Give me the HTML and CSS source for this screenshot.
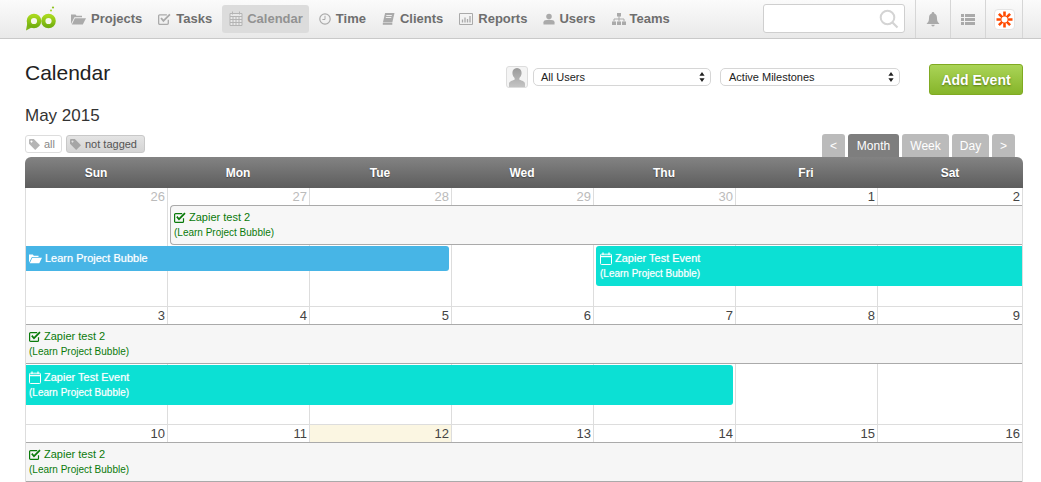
FILE: index.html
```html
<!DOCTYPE html>
<html lang="en">
<head>
<meta charset="utf-8">
<title>Calendar</title>
<link rel="stylesheet" href="styles.css">
</head>
<body>
<svg class="defs" width="0" height="0" aria-hidden="true">
  <symbol id="i-check" viewBox="0 0 12 11"><path d="M9.500 6.200V9.400a1 1 0 0 1-1 1H1.600a1 1 0 0 1-1-1V2.600a1 1 0 0 1 1-1h6.600" fill="none" stroke="currentColor" stroke-width="1.200"/><path d="M2.800 4.600 5 7.200 11 1.200" fill="none" stroke="currentColor" stroke-width="1.700"/></symbol>
  <symbol id="i-cal" viewBox="0 0 12 13"><path d="M1.500 2.200h9a1 1 0 0 1 1 1v8.300a1 1 0 0 1-1 1h-9a1 1 0 0 1-1-1V3.200a1 1 0 0 1 1-1z" fill="none" stroke="currentColor"/><path d="M.5 4.500h11" stroke="currentColor" stroke-width="1.400"/><path d="M3 .5v2.600M9 .5v2.600" stroke="currentColor" stroke-width="1.300"/></symbol>
  <symbol id="i-folder" viewBox="0 0 15 12"><path d="M0 11V1.500h4.500l1 1.300h5.500v1.400H3.400L0 11z" fill="currentColor"/><path d="M3.900 5.200H15L11.800 11.600H.8z" fill="currentColor"/></symbol>
  <symbol id="i-tag" viewBox="0 0 11 11"><path d="M0 1a1 1 0 0 1 1-1h3.800L11 6.200 6.200 11 0 4.800zM2.500 1.500a1 1 0 1 0 .01 0z" fill="currentColor" fill-rule="evenodd"/></symbol>
  <symbol id="i-updown" viewBox="0 0 6 10"><path d="M3 0l2.600 3.800H.4zM3 10 .4 6.200h5.200z" fill="currentColor"/></symbol>
</svg>

<header class="topbar">
  <svg class="logo" width="32" height="26" viewBox="0 0 32 26" aria-label="Project Bubble">
    <defs><linearGradient id="lg" x1="0" y1="0" x2="0" y2="1"><stop offset="0" stop-color="#a8d81e"/><stop offset="1" stop-color="#74b010"/></linearGradient></defs>
    <path d="M1 24.500 2.500 16 8.500 20.500z" fill="#7cb518"/>
    <circle cx="9" cy="15" r="5.200" fill="#f6f8ec" stroke="url(#lg)" stroke-width="4.200"/>
    <circle cx="23.500" cy="15" r="5.200" fill="#f6f8ec" stroke="url(#lg)" stroke-width="4.200"/>
    <circle cx="28" cy="1.500" r="1.100" fill="#8fc31f"/><circle cx="26" cy="4.500" r="1" fill="#a6d622"/>
  </svg>
  <nav class="nav">
    <a class="nav-item"><svg class="nav-ico" width="15" height="12"><use href="#i-folder"/></svg>Projects</a>
    <a class="nav-item"><svg class="nav-ico" width="13" height="12"><use href="#i-check"/></svg>Tasks</a>
    <a class="nav-item active"><svg class="nav-ico" width="14" height="15" viewBox="0 0 14 15"><path d="M1 2.500h12v12H1z" fill="#e8e8e8" stroke="currentColor"/><path d="M1 5.500h12M1 8.500h12M1 11.500h12M4 5.500v9M7 5.500v9M10 5.500v9M3.500 .5v3M10.500 .5v3" stroke="currentColor" fill="none"/></svg>Calendar</a>
    <a class="nav-item"><svg class="nav-ico" width="12" height="12" viewBox="0 0 12 12"><circle cx="6" cy="6" r="5.200" fill="none" stroke="currentColor" stroke-width="1.200"/><path d="M6 2.800V6.500H3.400" fill="none" stroke="currentColor"/></svg>Time</a>
    <a class="nav-item"><svg class="nav-ico" width="13" height="12" viewBox="0 0 12 12"><path d="M2.600 0H12L9.800 9.500H.4z" fill="currentColor"/><path d="M.3 10H9.800v1.800H.3z" fill="currentColor"/><path d="M3.800 2.500h5.500M3.300 4.500h5.500" stroke="#eee"/></svg>Clients</a>
    <a class="nav-item"><svg class="nav-ico" width="14" height="12" viewBox="0 0 14 12"><path d="M.5.500h13v11H.5z" fill="none" stroke="currentColor"/><path d="M3.500 6.500v3M6 4.500v5M8.500 6v3.500M11 3v6.500" stroke="currentColor" stroke-width="1.300"/></svg>Reports</a>
    <a class="nav-item nav-tight"><svg class="nav-ico" width="12" height="12" viewBox="0 0 13 12"><circle cx="6.500" cy="3.200" r="3" fill="currentColor"/><path d="M.5 12V9.500C.5 7.500 3 6.800 6.500 6.800s6 .7 6 2.700V12z" fill="currentColor"/></svg>Users</a>
    <a class="nav-item nav-tight"><svg class="nav-ico" width="14" height="12" viewBox="0 0 14 12"><path d="M5 0h4v3.500H5zM0 8.500h4V12H0zM5 8.500h4V12H5zM10 8.500h4V12h-4z" fill="currentColor"/><path d="M7 3v3M2 8.500V6h10v2.500M7 6v2.500" fill="none" stroke="currentColor"/></svg>Teams</a>
  </nav>
  <div class="search">
    <svg width="20" height="20" viewBox="0 0 20 20"><circle cx="8.500" cy="8.500" r="6.800" fill="none" stroke="#d4d4d4" stroke-width="2"/><path d="M13.500 13.500l5 5" stroke="#d4d4d4" stroke-width="2.200"/></svg>
  </div>
  <div class="tools">
    <div class="tool"><svg width="14" height="15" viewBox="0 0 14 15"><path d="M7 0a1.300 1.300 0 0 1 1.300 1.400C10.500 2 11 4 11 6.500c0 2.500 1 4 2.500 5.500H.5C2 10.500 3 9 3 6.500 3 4 3.500 2 5.700 1.400A1.300 1.300 0 0 1 7 0zM5.300 12.800h3.400a1.700 1.700 0 0 1-3.400 0z" fill="#aaa"/></svg></div>
    <div class="tool"><svg width="14" height="11" viewBox="0 0 14 11"><path d="M0 0h3v3H0zM4 0h10v3H4zM0 4h3v3H0zM4 4h10v3H4zM0 8h3v3H0zM4 8h10v3H4z" fill="#aaa"/></svg></div>
    <div class="tool tool-last"><span class="zap"><svg width="17" height="17" viewBox="0 0 17 17"><path d="M8.500 .5v16M.5 8.500h16M2.900 2.900l11.200 11.200M14.100 2.900 2.900 14.100" stroke="#ff4a00" stroke-width="2.600"/><circle cx="8.500" cy="8.500" r="3" fill="#fff"/></svg></span></div>
  </div>
</header>

<main class="main">
  <div class="toolbar">
    <h1 class="title">Calendar</h1>
    <div class="filters">
      <span class="avatar"><svg width="20" height="20" viewBox="0 0 20 20"><defs><linearGradient id="av" x1="0" y1="0" x2="0" y2="1"><stop offset="0" stop-color="#9a9a9a"/><stop offset="1" stop-color="#c4c4c4"/></linearGradient></defs><path d="M10 1c3 0 4.600 2.200 4.600 5 0 2.200-1 4-2.200 5v1.800c2.500.8 5.600 1.600 5.600 4.200v3H2v-3c0-2.600 3.100-3.400 5.600-4.200V11c-1.200-1-2.200-2.800-2.200-5 0-2.800 1.600-5 4.600-5z" fill="url(#av)"/></svg></span>
      <div class="picker picker-users">All Users<svg width="6" height="10"><use href="#i-updown"/></svg></div>
      <div class="picker picker-miles">Active Milestones<svg width="6" height="10"><use href="#i-updown"/></svg></div>
    </div>
    <a class="add-btn">Add Event</a>
  </div>
  <h2 class="month">May 2015</h2>
  <div class="tagrow">
    <div class="tags">
      <span class="tag"><svg width="11" height="11"><use href="#i-tag"/></svg>all</span>
      <span class="tag tag-on"><svg width="11" height="11"><use href="#i-tag"/></svg>not tagged</span>
    </div>
    <div class="views">
      <span class="view">&lt;</span>
      <span class="view view-on view-month">Month</span>
      <span class="view view-week">Week</span>
      <span class="view view-day">Day</span>
      <span class="view">&gt;</span>
    </div>
  </div>

  <section class="calendar">
    <div class="cal-head">
      <div>Sun</div><div>Mon</div><div>Tue</div><div>Wed</div><div>Thu</div><div>Fri</div><div>Sat</div>
    </div>

    <div class="week week-first">
      <div class="col"><div class="date muted">26</div></div>
      <div class="col"><div class="date muted">27</div></div>
      <div class="col"><div class="date muted">28</div></div>
      <div class="col"><div class="date muted">29</div></div>
      <div class="col"><div class="date muted">30</div></div>
      <div class="col"><div class="date">1</div></div>
      <div class="col"><div class="date">2</div></div>
      <div class="task task-box">
        <div class="ev-title"><svg width="12" height="11"><use href="#i-check"/></svg>Zapier test 2</div>
        <div class="ev-sub">(Learn Project Bubble)</div>
      </div>
      <div class="event project">
        <div class="ev-title"><svg width="13" height="11"><use href="#i-folder"/></svg>Learn Project Bubble</div>
      </div>
      <div class="event teal teal-a">
        <div class="ev-title"><svg width="12" height="13"><use href="#i-cal"/></svg>Zapier Test Event</div>
        <div class="ev-sub">(Learn Project Bubble)</div>
      </div>
    </div>

    <div class="week">
      <div class="col"><div class="date">3</div></div>
      <div class="col"><div class="date">4</div></div>
      <div class="col"><div class="date">5</div></div>
      <div class="col"><div class="date">6</div></div>
      <div class="col"><div class="date">7</div></div>
      <div class="col"><div class="date">8</div></div>
      <div class="col"><div class="date">9</div></div>
      <div class="task">
        <div class="ev-title"><svg width="12" height="11"><use href="#i-check"/></svg>Zapier test 2</div>
        <div class="ev-sub">(Learn Project Bubble)</div>
      </div>
      <div class="event teal teal-b">
        <div class="ev-title"><svg width="12" height="13"><use href="#i-cal"/></svg>Zapier Test Event</div>
        <div class="ev-sub">(Learn Project Bubble)</div>
      </div>
    </div>

    <div class="week week-last">
      <div class="col"><div class="date">10</div></div>
      <div class="col"><div class="date">11</div></div>
      <div class="col"><div class="date today">12</div></div>
      <div class="col"><div class="date">13</div></div>
      <div class="col"><div class="date">14</div></div>
      <div class="col"><div class="date">15</div></div>
      <div class="col"><div class="date">16</div></div>
      <div class="task">
        <div class="ev-title"><svg width="12" height="11"><use href="#i-check"/></svg>Zapier test 2</div>
        <div class="ev-sub">(Learn Project Bubble)</div>
      </div>
    </div>
  </section>
</main>
</body>
</html>
```
FILE: styles.css
```css
* { box-sizing: border-box; }
html, body { margin: 0; height: 482px; overflow: hidden; }
body { background: #fff; color: #333; font-family: "Liberation Sans", Arial, sans-serif; }
.defs { position: absolute; }

/* top bar */
.topbar {
  display: flex; align-items: center; height: 39px; padding-left: 25px;
  background: linear-gradient(#fbfbfb, #e9e9e9);
  border-bottom: 1px solid #c9c9c9;
}
.logo { flex: none; margin-top: -1px; }
.nav { display: flex; align-items: center; margin-left: 8px; }
.nav-item {
  display: flex; align-items: center; gap: 5px; height: 28px; padding: 0 6px;
  margin-right: 4px; margin-top: -1px; border-radius: 3px;
  font-size: 13px; font-weight: bold; color: #6e6e6e; white-space: nowrap;
}
.nav-tight { gap: 4px; }
.nav-ico { flex: none; color: #aaa; }
.nav-item.active { background: #dcdcdc; color: #929292; padding: 0 6px 0 7px; gap: 4px; }
.nav-item.active .nav-ico { color: #b4b4b4; }

.search {
  display: flex; align-items: center; justify-content: flex-end;
  width: 142px; height: 29px; margin-left: auto; margin-top: -1px; padding-right: 5px;
  background: #fff; border: 1px solid #cfcfcf; border-radius: 3px;
}
.tools { display: flex; align-self: stretch; margin-left: 10px; margin-right: 18px; }
.tool {
  display: flex; align-items: center; justify-content: center;
  width: 35px; border-left: 1px solid #d6d6d6;
}
.tool-last { width: 38px; border-right: 1px solid #d6d6d6; }
.zap {
  display: flex; align-items: center; justify-content: center;
  width: 21px; height: 21px; background: #fff; border: 1px solid #e4e4e4; border-radius: 4px;
}

/* page */
.main { padding: 0 18px 0 25px; }
.toolbar { display: flex; align-items: flex-start; height: 31px; margin-top: 25px; }
.title { margin: 0; font-size: 21px; font-weight: normal; line-height: 18px; color: #222; }
.filters { display: flex; align-items: center; margin-left: auto; margin-top: 2px; margin-right: 29px; }
.avatar {
  display: flex; align-items: flex-end; justify-content: center; overflow: hidden;
  width: 22px; height: 22px; margin-right: 5px;
  background: #f4f4f4; border: 1px solid #ddd; border-radius: 3px;
}
.picker {
  display: flex; align-items: center; justify-content: space-between;
  height: 18px; padding: 0 5px 0 8px; color: #222; font-size: 11px;
  background: #fff; border: 1px solid #d6d6d6; border-radius: 5px;
}
.picker-users { width: 178px; margin-right: 9px; padding-left: 7px; }
.picker-miles { width: 180px; }
.add-btn {
  display: block; width: 94px; height: 31px; line-height: 30px; text-align: center;
  font-size: 14px; font-weight: bold; color: #fff; text-shadow: 0 1px 2px rgba(60, 90, 0, .7);
  background: linear-gradient(#aad457, #86b52a); border: 1px solid #80aa22; border-radius: 3px;
}
.month { margin: 11px 0 0; font-size: 17px; font-weight: normal; line-height: 20px; color: #333; }

.tagrow { display: flex; justify-content: space-between; height: 23px; margin-top: 8px; }
.tags { display: flex; gap: 4px; margin-top: 1px; }
.tag {
  display: flex; align-items: center; gap: 4px; height: 18px; padding: 0 3px;
  font-size: 11px; color: #888; background: #fff; border: 1px solid #ddd; border-radius: 3px;
}
.tag:first-child { width: 37px; }
.tag svg { color: #b5b5b5; flex: none; }
.tag-on { width: 79px; color: #555; background: linear-gradient(#e4e4e4, #d4d4d4); border-color: #c8c8c8; }
.tag-on svg { color: #a5a5a5; }

.views { display: flex; gap: 3px; margin-right: 8px; }
.view {
  display: flex; align-items: center; justify-content: center;
  width: 23px; height: 23px; padding-top: 1px; color: #fff; font-size: 12px;
  background: #bbb; border-radius: 3px 3px 0 0;
}
.view-on { background: #7e7e7e; }
.view-month { width: 51px; }
.view-week { width: 47px; }
.view-day { width: 37px; }

/* calendar */
.calendar { width: 998px; }
.cal-head {
  display: grid; grid-template-columns: repeat(6, 142px) 1fr; height: 31px;
  background: linear-gradient(#838383, #5d5d5d); border-radius: 6px 6px 0 0;
}
.cal-head div {
  text-align: center; line-height: 32px; font-size: 12px; font-weight: bold; color: #fff;
  text-shadow: 0 1px 1px rgba(0, 0, 0, .35);
}
.week {
  display: grid; height: 118px;
  grid-template-columns: repeat(6, 142px) 1fr;
  grid-template-rows: 17px 40px 60px;
  border-top: 1px solid #ddd; border-right: 1px solid #ddd;
}
.week-first { border-top: 0; grid-template-rows: 17px 40px 61px; }
.week-last { height: 58px; grid-template-rows: 17px 40px; }
.col { grid-row: 1 / -1; border-left: 1px solid #ddd; min-width: 0; }
.col:nth-child(1) { grid-column: 1; }
.col:nth-child(2) { grid-column: 2; }
.col:nth-child(3) { grid-column: 3; }
.col:nth-child(4) { grid-column: 4; }
.col:nth-child(5) { grid-column: 5; }
.col:nth-child(6) { grid-column: 6; }
.col:nth-child(7) { grid-column: 7; }
.date {
  height: 17px; padding-right: 2px; text-align: right;
  font-size: 13px; line-height: 17px; color: #444;
}
.muted { color: #bbb; }
.today { background: #fbf6e2; }

.task, .event { min-width: 0; font-size: 11px; overflow: hidden; white-space: nowrap; }
.ev-title { display: flex; align-items: center; gap: 3px; height: 16px; padding-left: 3px; }
.ev-title svg { flex: none; }
.ev-sub { height: 12px; margin-top: 2px; padding-left: 3px; font-size: 10px; line-height: 12px; }
.task {
  grid-row: 2; grid-column: 1 / -1; margin-left: 1px; padding-top: 3px; color: #0a7a0a;
  background: #f6f6f6; border-top: 1px solid #aaa; border-bottom: 1px solid #aaa;
}
.task-box {
  grid-column: 2 / -1; margin-left: 3px; background: #f7f7f7;
  border-left: 1px solid #aaa; border-radius: 4px 0 0 4px;
}
.event {
  grid-row: 3; margin-top: 1px; height: 40px; padding-top: 4px; color: #fff;
  text-shadow: 0 0 1px rgba(255, 255, 255, .6);
}
.project {
  grid-column: 1 / span 3; height: 25px; margin-left: 1px; margin-right: 2px;
  background: #47b5e6; border-radius: 0 3px 3px 0;
}
.teal { background: #0ce0d4; }
.teal-a { grid-column: 5 / -1; margin-left: 3px; border-radius: 3px 0 0 3px; }
.teal-a .ev-title, .teal-a .ev-sub { padding-left: 4px; }
.teal-b { grid-column: 1 / span 5; margin-left: 1px; margin-right: 2px; border-radius: 0 3px 3px 0; }
```
